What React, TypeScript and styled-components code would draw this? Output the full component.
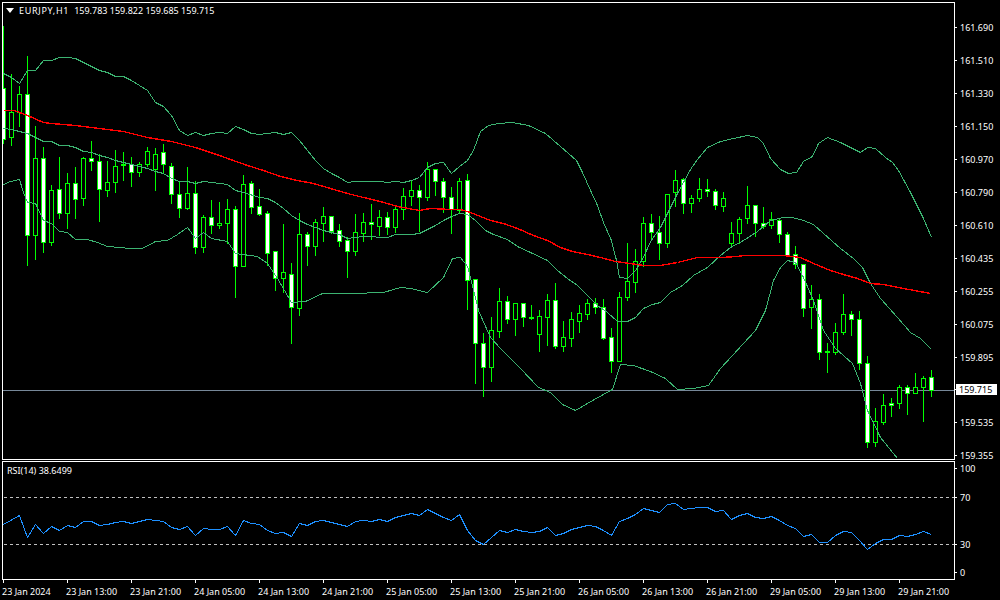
import React from 'react'
import styled, { createGlobalStyle } from 'styled-components'

// [high, bodyTop, bodyBottom, low, bearish]
type Candle = [number, number, number, number, number]

const candles: Candle[] = [
    [26, 88, 139, 143, 1], [74, 112, 137, 145, 0], [86, 94, 112, 126, 0], [56, 94, 235, 265, 1],
    [126, 158, 235, 259, 0], [147, 158, 242, 252, 1], [185, 190, 242, 245, 0], [157, 189, 213, 218, 1],
    [173, 183, 213, 228, 0], [167, 183, 199, 218, 1], [157, 158, 198, 205, 0], [141, 158, 161, 170, 1],
    [154, 161, 189, 221, 1], [161, 182, 190, 196, 0], [150, 166, 182, 192, 0], [152, 164, 165, 180, 1],
    [157, 164, 172, 186, 1], [162, 164, 172, 176, 0], [147, 151, 164, 166, 0], [148, 154, 169, 190, 0],
    [144, 152, 164, 172, 1], [163, 166, 194, 203, 1], [181, 194, 208, 217, 1], [167, 193, 208, 209, 0],
    [181, 193, 247, 253, 1], [215, 217, 247, 252, 0], [200, 217, 225, 233, 1], [202, 223, 225, 228, 0],
    [199, 209, 223, 243, 0], [206, 209, 266, 297, 1], [175, 184, 266, 266, 0], [181, 183, 207, 213, 1],
    [189, 206, 214, 215, 1], [211, 213, 253, 265, 1], [251, 251, 278, 290, 1], [224, 272, 278, 292, 0],
    [263, 274, 307, 343, 1], [213, 234, 308, 315, 0], [232, 234, 246, 265, 1], [219, 222, 246, 255, 0],
    [207, 216, 223, 241, 0], [216, 216, 231, 233, 1], [224, 230, 241, 246, 1], [237, 240, 251, 277, 1],
    [214, 232, 251, 255, 0], [213, 222, 233, 241, 0], [204, 222, 224, 239, 1], [210, 217, 226, 235, 0],
    [212, 217, 227, 234, 1], [207, 209, 227, 232, 0], [188, 196, 209, 219, 0], [181, 190, 196, 205, 0],
    [185, 190, 197, 231, 1], [162, 169, 197, 200, 0], [169, 169, 181, 195, 1], [178, 181, 197, 212, 1],
    [187, 197, 209, 233, 1], [178, 181, 210, 212, 0], [174, 180, 280, 309, 1], [279, 279, 343, 383, 1],
    [333, 343, 367, 396, 1], [317, 330, 367, 381, 0], [288, 301, 331, 337, 0], [296, 301, 319, 323, 1],
    [303, 303, 319, 335, 0], [303, 303, 317, 326, 1], [305, 317, 318, 319, 0], [310, 316, 334, 351, 0],
    [294, 300, 317, 345, 0], [283, 300, 346, 348, 1], [321, 337, 346, 351, 0], [312, 319, 338, 346, 0],
    [305, 313, 321, 332, 0], [299, 303, 314, 319, 0], [298, 303, 307, 313, 1], [299, 307, 338, 339, 1],
    [328, 337, 361, 372, 1], [292, 297, 361, 361, 0], [243, 281, 297, 300, 0], [249, 261, 282, 292, 0],
    [217, 223, 261, 266, 0], [214, 223, 232, 238, 1], [216, 232, 243, 259, 1], [194, 194, 243, 247, 0],
    [170, 180, 192, 206, 0], [178, 179, 203, 213, 1], [195, 198, 203, 212, 0], [178, 189, 198, 201, 0],
    [179, 189, 191, 196, 1], [189, 191, 205, 209, 1], [192, 198, 206, 211, 0], [222, 233, 243, 247, 0],
    [217, 219, 233, 243, 0], [186, 205, 218, 223, 0], [205, 205, 223, 236, 1], [207, 223, 226, 228, 1],
    [212, 219, 225, 228, 0], [218, 220, 234, 242, 1], [232, 234, 255, 255, 1], [246, 254, 264, 268, 1],
    [264, 264, 308, 316, 1], [285, 299, 307, 328, 0], [294, 299, 352, 359, 1], [343, 351, 352, 372, 0],
    [323, 332, 352, 354, 0], [294, 314, 332, 334, 0], [311, 314, 319, 335, 1], [311, 319, 363, 369, 1],
    [356, 363, 442, 447, 1], [408, 421, 442, 446, 0], [394, 405, 422, 424, 0], [398, 403, 405, 416, 1],
    [385, 387, 403, 408, 0], [385, 387, 393, 414, 1], [373, 387, 393, 393, 0], [376, 378, 387, 421, 0],
    [370, 377, 390, 396, 1],
]

const upperBand =
    '3,73 11,77 19,83 27,70 35,70 43,60 51,60 59,57 67,57 75,58 83,62 91,66 99,70 107,72 115,76 123,76 131,80 139,85 147,90 155,102 163,106 171,115 179,130 187,135 195,132 203,135 211,133 219,132 227,133 235,126 243,129 251,133 259,134 267,133 275,132 283,134 291,132 299,140 307,150 315,160 323,168 331,173 339,177 347,182 355,181 363,181 371,181 379,181 387,182 395,181 403,182 411,180 419,177 427,167 435,163 443,162 451,173 459,166 467,160 473,150 480,131 488,125 498,123 512,122 528,125 545,133 560,146 576,160 582,172 590,190 597,205 603,222 611,240 616,260 619,277 627,278 635,270 643,257 650,241 660,227 677,193 690,169 697,159 707,147 720,141 733,138 747,135 757,137 763,143 770,158 780,169 788,173 796,172 803,161 812,156 818,143 827,137 840,142 860,152 867,147 875,148 885,157 892,162 898,170 910,192 923,218 931,237'

const middleBand =
    '3,128 11,129 19,131 27,133 35,137 43,141 51,141 59,145 67,145 75,147 83,151 91,152 99,155 107,157 115,160 123,162 131,164 139,166 147,168 155,171 163,173 171,178 179,181 187,181 195,183 203,181 211,182 219,183 227,184 235,190 243,192 259,197 267,198 275,202 283,208 291,215 299,220 307,224 315,227 323,230 331,232 339,234 347,238 355,237 363,236 371,236 379,237 387,237 395,234 403,234 411,234 419,233 427,229 435,225 443,220 451,216 459,213 467,214 475,220 485,230 493,234 507,239 517,246 530,252 547,260 557,270 567,278 577,285 587,295 597,305 607,312 617,321 627,321 635,317 643,308 652,304 660,302 670,292 682,285 693,275 707,267 720,255 730,247 743,240 757,231 770,220 783,217 792,217 803,220 813,224 823,233 840,248 853,258 862,267 870,283 880,298 897,317 910,332 920,338 931,349'

const lowerBand =
    '3,184 10,181 19,179 23,192 27,202 35,203 43,220 51,223 59,231 67,232 75,239 87,239 97,242 107,246 119,247 129,248 141,248 148,245 155,241 167,240 177,234 187,227 195,238 203,232 211,238 227,241 235,253 257,256 267,263 277,278 291,302 305,301 322,293 343,293 350,293 383,292 400,287 410,288 427,292 443,277 452,258 460,257 467,266 470,277 478,310 490,337 500,348 520,368 538,387 550,392 562,404 575,410 592,400 612,389 620,364 633,365 650,371 665,378 677,389 693,388 708,385 720,368 743,343 755,330 765,310 773,280 780,267 787,260 795,262 803,277 813,300 823,330 835,348 852,363 860,383 867,410 880,437 897,458'

const movingAverage =
    '3,110 14,110 27,115 43,122 51,123 75,125 99,128 123,131 147,137 171,141 195,147 219,155 230,159 247,165 263,170 280,176 297,180 313,183 330,188 347,193 363,197 380,201 397,206 419,210 430,208 450,209 460,209 470,212 490,220 503,223 517,228 533,235 547,240 560,247 572,251 587,254 600,257 615,261 630,263 643,265 660,265 677,262 697,257 720,257 737,256 743,255 783,255 800,257 813,263 830,270 843,274 857,278 870,283 883,284 903,288 930,293'

const rsiLine =
    '3,524 19,515 27,537 35,524 43,533 51,526 59,530 67,525 75,527 83,521 91,521 99,525 107,524 115,522 123,521 131,523 139,521 147,519 155,520 163,521 171,527 179,529 187,526 195,535 203,528 211,529 219,529 227,526 235,535 243,520 251,523 259,524 267,530 275,533 283,532 291,536 299,523 307,525 315,521 323,520 331,522 339,524 347,526 355,521 363,520 371,521 379,519 387,521 395,517 403,515 411,513 419,515 427,509 435,513 443,517 451,520 459,514 467,530 475,540 483,544 491,537 499,530 507,532 515,529 523,531 531,532 539,531 547,527 555,535 563,533 571,529 579,527 587,525 595,526 603,530 611,535 619,521 627,518 635,514 643,508 651,510 659,512 667,504 675,503 683,509 691,508 699,507 707,507 715,511 723,510 731,519 739,515 747,513 755,517 763,518 771,516 779,520 787,525 795,528 803,536 811,534 819,542 827,542 835,535 843,531 851,532 859,540 867,549 875,543 883,539 891,539 899,535 907,536 915,534 923,531 931,534'

const prices = [
    '161.690', '161.510', '161.330', '161.150', '160.970', '160.790', '160.610',
    '160.435', '160.255', '160.075', '159.895', '159.715', '159.535', '159.355',
]

const times = [
    '23 Jan 2024', '23 Jan 13:00', '23 Jan 21:00', '24 Jan 05:00', '24 Jan 13:00',
    '24 Jan 21:00', '25 Jan 05:00', '25 Jan 13:00', '25 Jan 21:00', '26 Jan 05:00',
    '26 Jan 13:00', '26 Jan 21:00', '29 Jan 05:00', '29 Jan 13:00', '29 Jan 21:00',
]

const rsiLevels = [
    { label: '100', span: 29 },
    { label: '70', span: 47 },
    { label: '30', span: 28 },
    { label: '0', span: 11 },
]

const CandleMark = ({ candle, index }: { candle: Candle; index: number }) => {
    const [high, top, bottom, low, bearish] = candle
    const x = 3 + index * 8
    return (
        <g>
            <rect x={x} y={high} width={1} height={low - high + 1} fill='#00ff00' />
            <rect
                x={x - 1.5}
                y={top + 0.5}
                width={4}
                height={bottom - top}
                fill={bearish ? '#ffffff' : '#000000'}
                stroke='#00ff00'
            />
        </g>
    )
}

const App = () => {
    return (
        <Screen>
            <GlobalStyle />
            <PriceFrame>
                <Legend>
                    <svg width='8' height='5' viewBox='0 0 8 5'>
                        <polygon points='0,0 8,0 4,5' fill='#ffffff' />
                    </svg>
                    <Symbol>EURJPY,H1</Symbol>
                    <span>159.783 159.822 159.685 159.715</span>
                </Legend>
                <ChartSvg width='951' height='456' viewBox='3 3 951 456'>
                    <line x1='3' y1='390.5' x2='954' y2='390.5' stroke='#778899' />
                    {candles.map((candle, index) => (
                        <CandleMark key={index} candle={candle} index={index} />
                    ))}
                    <g transform='translate(0.5 0.5)' fill='none'>
                        <polyline points={upperBand} stroke='#3cb371' />
                        <polyline points={middleBand} stroke='#3cb371' />
                        <polyline points={lowerBand} stroke='#3cb371' />
                        <polyline points={movingAverage} stroke='#ff0000' strokeWidth='1.4' />
                    </g>
                </ChartSvg>
            </PriceFrame>
            <PriceAxis>
                {prices.map((price) => (
                    <AxisRow key={price}>
                        <AxisTick />
                        <AxisValue $current={price === '159.715'}>{price}</AxisValue>
                    </AxisRow>
                ))}
            </PriceAxis>
            <RsiFrame>
                <RsiLegend>RSI(14) 38.6499</RsiLegend>
                <ChartSvg width='951' height='117' viewBox='3 462 951 117'>
                    <g transform='translate(0.5 0.5)' fill='none'>
                        <line x1='3' y1='497' x2='954' y2='497' stroke='#c0c0c0' strokeDasharray='3 3' />
                        <line x1='3' y1='544' x2='954' y2='544' stroke='#c0c0c0' strokeDasharray='3 3' />
                        <polyline points={rsiLine} stroke='#1e90ff' />
                    </g>
                </ChartSvg>
            </RsiFrame>
            <RsiAxis>
                {rsiLevels.map((level) => (
                    <RsiRow key={level.label} $span={level.span}>
                        <AxisTick />
                        <AxisValue>{level.label}</AxisValue>
                    </RsiRow>
                ))}
            </RsiAxis>
            <TimeAxis>
                {times.map((time) => (
                    <TimeCell key={time}>
                        <TimeTick />
                        <TimeLabel>{time}</TimeLabel>
                    </TimeCell>
                ))}
            </TimeAxis>
        </Screen>
    )
}

export default App

const GlobalStyle = createGlobalStyle`
    html, body {
        margin: 0;
        background: #000000;
    }
    svg {
        display: block;
    }
`

const Screen = styled.div`
    width: 998px;
    height: 598px;
    padding: 2px 0 0 2px;
    overflow: hidden;
    background: #000000;
    color: #ffffff;
    font-family: 'Noto Sans', sans-serif;
    font-size: 9px;
    line-height: 11px;
    display: grid;
    grid-template-columns: 953px 45px;
    grid-template-rows: 458px 119px 19px;
    row-gap: 1px;
`

const PriceFrame = styled.div`
    position: relative;
    border: 1px solid #ffffff;
`

const RsiFrame = styled(PriceFrame)``

const ChartSvg = styled.svg`
    shape-rendering: crispEdges;
`

const Legend = styled.div`
    position: absolute;
    top: 2px;
    left: 3px;
    display: flex;
    align-items: center;
    gap: 5px;
    white-space: nowrap;
`

const Symbol = styled.span`
    letter-spacing: 0.7px;
`

const RsiLegend = styled.div`
    position: absolute;
    top: 3px;
    left: 4px;
    white-space: nowrap;
`

const PriceAxis = styled.div`
    height: 458px;
    padding-top: 9.5px;
    box-sizing: border-box;
    display: grid;
    grid-auto-rows: 32.92px;
`

const AxisRow = styled.div`
    display: flex;
    align-items: center;
`

const AxisTick = styled.span`
    width: 2px;
    height: 1px;
    margin-right: 3px;
    background: #ffffff;
    flex: none;
`

const AxisValue = styled.span<{ $current?: boolean }>`
    padding: 0 ${(p) => (p.$current ? '5px 0 3px' : '0')};
    margin-left: ${(p) => (p.$current ? '-4px' : '0')};
    background: ${(p) => (p.$current ? '#ffffff' : 'transparent')};
    color: ${(p) => (p.$current ? '#000000' : '#ffffff')};
`

const RsiAxis = styled.div`
    padding-top: 1.5px;
    display: flex;
    flex-direction: column;
`

const RsiRow = styled.div<{ $span: number }>`
    height: ${(p) => p.$span}px;
    display: flex;
    align-items: flex-start;
    flex: none;
    ${AxisTick} {
        margin-top: 5px;
    }
`

const TimeAxis = styled.div`
    grid-column: 1 / -1;
    margin-top: -1px;
    padding-left: 1px;
    display: flex;
`

const TimeCell = styled.div`
    width: 64px;
    flex: none;
`

const TimeTick = styled.div`
    width: 1px;
    height: 3px;
    background: #ffffff;
`

const TimeLabel = styled.div`
    margin: 3px 0 0 -1px;
    white-space: nowrap;
`
